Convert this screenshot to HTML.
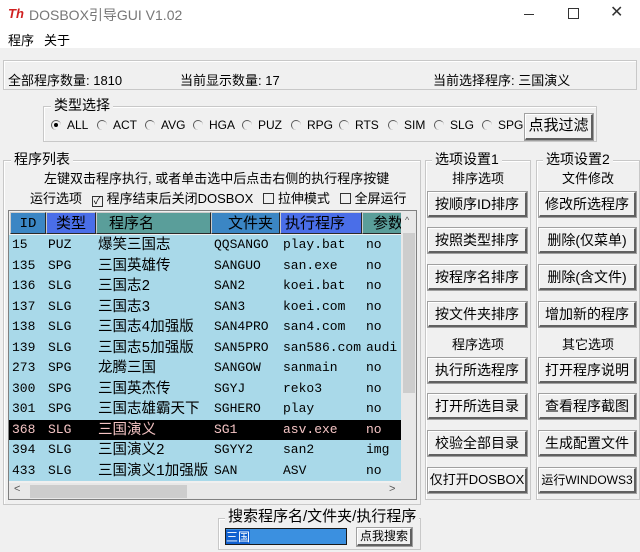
<!DOCTYPE html><html><head><meta charset="utf-8"><style>
*{margin:0;padding:0;box-sizing:border-box}
body{width:640px;height:552px;background:#f0f0f0;position:relative;overflow:hidden;font-family:"Liberation Sans","Noto Sans CJK SC",sans-serif;font-size:13px;color:#000}
.a{position:absolute;white-space:nowrap}
.grp{position:absolute;border:1px solid #c8c8c8;box-shadow:inset 1px 1px 0 #fff}
.lg{position:absolute;background:#f0f0f0;padding:0 3px;font-size:14px;line-height:16px}
.btn{position:absolute;background:#f0f0f0;border:1px solid #fff;border-right:2px solid #606060;border-bottom:2px solid #606060;outline:1px solid #a0a0a0;font-size:14px;text-align:center;line-height:22px;font-family:"Liberation Sans","Noto Sans CJK SC",sans-serif}
.rad{position:absolute;top:118px;font-size:12px;white-space:nowrap}
.rad i{display:inline-block;width:10px;height:10px;border-radius:50%;border-left:1px solid #555;border-top:1px solid #555;margin-right:6px;vertical-align:-1px;position:relative}
.rad i.on::after{content:"";position:absolute;left:2px;top:2px;width:4px;height:4px;border-radius:50%;background:#000}
.tbl{position:absolute;left:8px;top:210px;width:409px;height:290px;border:1px solid #808080;background:#f0f0f0;overflow:hidden}
.row{position:absolute;left:0;width:392px;height:20.5px;background:#a9d9e9;font-family:"Liberation Mono","Noto Serif CJK SC",monospace;font-size:13px;line-height:20px}
.row span{position:absolute;top:0}
.row span.c{font-size:14.5px;font-family:"Liberation Mono","Noto Sans CJK SC",monospace;line-height:20px;top:1px}
.hd{position:absolute;top:1px;height:22px;font-size:15px;line-height:22px;border:1px solid #2a2a2a;border-top-color:#ccc;border-left-color:#ccc}
.cb{display:inline-block;width:11px;height:11px;border:1px solid #333;margin:0 4px 0 6px;vertical-align:-1px;font-size:10px;line-height:9px;text-align:center}
</style></head><body>
<div class="a" style="left:0;top:0;width:640px;height:48px;background:#fff"></div>
<div class="a" style="left:8px;top:6px;color:#d02020;font-style:italic;font-weight:bold;font-size:13px">Th</div>
<div class="a" style="left:29px;top:5px;color:#777;font-size:14px">DOSBOX引导GUI V1.02</div>
<div class="a" style="width:10px;height:1px;background:#333;left:524px;top:14px"></div>
<div class="a" style="left:568px;top:8px;width:11px;height:11px;border:1px solid #333"></div>
<div class="a" style="left:610px;top:2px;font-size:16px;color:#333">✕</div>
<div class="a" style="left:8px;top:30px">程序</div>
<div class="a" style="left:44px;top:30px">关于</div>
<div class="grp" style="left:3px;top:60px;width:634px;height:30px"></div>
<div class="a" style="left:8px;top:70px">全部程序数量: 1810</div>
<div class="a" style="left:180px;top:70px">当前显示数量: 17</div>
<div class="a" style="left:433px;top:70px">当前选择程序: 三国演义</div>
<div class="grp" style="left:43px;top:106px;width:554px;height:36px"></div>
<div class="lg" style="left:51px;top:97px">类型选择</div>
<span class="rad" style="left:51px"><i class="on"></i>ALL</span>
<span class="rad" style="left:97px"><i></i>ACT</span>
<span class="rad" style="left:145px"><i></i>AVG</span>
<span class="rad" style="left:193px"><i></i>HGA</span>
<span class="rad" style="left:242px"><i></i>PUZ</span>
<span class="rad" style="left:291px"><i></i>RPG</span>
<span class="rad" style="left:339px"><i></i>RTS</span>
<span class="rad" style="left:388px"><i></i>SIM</span>
<span class="rad" style="left:434px"><i></i>SLG</span>
<span class="rad" style="left:482px"><i></i>SPG</span>
<div class="btn" style="left:525px;top:114px;width:68px;height:26px;font-size:15px;line-height:22px">点我过滤</div>
<div class="grp" style="left:3px;top:160px;width:418px;height:345px"></div>
<div class="lg" style="left:11px;top:151px">程序列表</div>
<div class="a" style="left:44px;top:168px">左键双击程序执行, 或者单击选中后点击右侧的执行程序按键</div>
<div class="a" style="left:30px;top:188px">运行选项 <span class="cb">✓</span>程序结束后关闭DOSBOX <span class="cb"></span>拉伸模式 <span class="cb"></span>全屏运行</div>
<div class="tbl">
<div class="hd" style="left:1px;width:36px;background:#3b86c4;text-align:center;font-family:'Liberation Mono',monospace;font-size:14px">ID</div>
<div class="hd" style="left:37px;width:50px;background:#4a6ee8;text-align:center">类型</div>
<div class="hd" style="left:87px;width:115px;background:#5a9e9a;padding-left:12px">程序名</div>
<div class="hd" style="left:202px;width:69px;background:#3b86c4;text-align:right;padding-right:6px">文件夹</div>
<div class="hd" style="left:271px;width:82px;background:#4a6ee8;padding-left:4px">执行程序</div>
<div class="hd" style="left:353px;width:45px;background:#5a9e9a;padding-left:10px">参数</div>
<div class="a" style="left:392px;top:0;width:16px;height:272px;background:#e8e8e8"></div>
<div class="a" style="left:396px;top:4px;font-size:9px;color:#555">^</div>
<div class="a" style="left:394px;top:22px;width:12px;height:160px;background:#cdcdcd"></div>
<div class="a" style="left:0;top:272px;width:408px;height:17px;background:#e8e8e8"></div>
<div class="a" style="left:21px;top:274px;width:157px;height:13px;background:#cdcdcd"></div>
<div class="a" style="left:5px;top:272px;font-size:11px;color:#555">&lt;</div>
<div class="a" style="left:380px;top:272px;font-size:11px;color:#555">&gt;</div>
</div>
<div id="rows"></div>
<script>
var d=[["15","PUZ","爆笑三国志","QQSANGO","play.bat","no"],["135","SPG","三国英雄传","SANGUO","san.exe","no"],["136","SLG","三国志2","SAN2","koei.bat","no"],["137","SLG","三国志3","SAN3","koei.com","no"],["138","SLG","三国志4加强版","SAN4PRO","san4.com","no"],["139","SLG","三国志5加强版","SAN5PRO","san586.com","audi"],["273","SPG","龙腾三国","SANGOW","sanmain","no"],["300","SPG","三国英杰传","SGYJ","reko3","no"],["301","SPG","三国志雄霸天下","SGHERO","play","no"],["368","SLG","三国演义","SG1","asv.exe","no"],["394","SLG","三国演义2","SGYY2","san2","img"],["433","SLG","三国演义1加强版","SAN","ASV","no"]];
var x=[3,39,89,205,274,357],h="";
for(var i=0;i<d.length;i++){var s=i==9;h+='<div class="row" style="left:9px;top:'+(235+i*20.5)+'px;'+(s?'background:#000;color:#f4c4c4':'')+'">';for(var j=0;j<6;j++)h+='<span'+(j==2?' class="c"':'')+' style="left:'+x[j]+'px">'+d[i][j]+'</span>';h+='</div>';}
document.getElementById("rows").innerHTML=h;
</script>
<div class="grp" style="left:425px;top:160px;width:106px;height:340px"></div>
<div class="lg" style="left:432px;top:151px">选项设置1</div>
<div class="a" style="left:452px;top:168px">排序选项</div>
<div class="grp" style="left:536px;top:160px;width:104px;height:340px"></div>
<div class="lg" style="left:543px;top:151px">选项设置2</div>
<div class="a" style="left:562px;top:168px">文件修改</div>
<div class="btn" style="left:428px;top:192px;width:99px;height:25px">按顺序ID排序</div>
<div class="btn" style="left:428px;top:228px;width:99px;height:25px">按照类型排序</div>
<div class="btn" style="left:428px;top:265px;width:99px;height:25px">按程序名排序</div>
<div class="btn" style="left:428px;top:302px;width:99px;height:25px">按文件夹排序</div>
<div class="a" style="left:452px;top:334px">程序选项</div>
<div class="btn" style="left:428px;top:358px;width:99px;height:25px">执行所选程序</div>
<div class="btn" style="left:428px;top:394px;width:99px;height:25px">打开所选目录</div>
<div class="btn" style="left:428px;top:431px;width:99px;height:25px">校验全部目录</div>
<div class="btn" style="left:428px;top:468px;width:99px;height:25px;font-size:13px">仅打开DOSBOX</div>
<div class="btn" style="left:539px;top:192px;width:97px;height:25px">修改所选程序</div>
<div class="btn" style="left:539px;top:228px;width:97px;height:25px">删除(仅菜单)</div>
<div class="btn" style="left:539px;top:265px;width:97px;height:25px">删除(含文件)</div>
<div class="btn" style="left:539px;top:302px;width:97px;height:25px">增加新的程序</div>
<div class="a" style="left:562px;top:334px">其它选项</div>
<div class="btn" style="left:539px;top:358px;width:97px;height:25px">打开程序说明</div>
<div class="btn" style="left:539px;top:394px;width:97px;height:25px">查看程序截图</div>
<div class="btn" style="left:539px;top:431px;width:97px;height:25px">生成配置文件</div>
<div class="btn" style="left:539px;top:468px;width:97px;height:25px;font-size:12px">运行WINDOWS3</div>
<div class="grp" style="left:218px;top:518px;width:203px;height:32px"></div>
<div class="lg" style="left:225px;top:509px;font-size:15px">搜索程序名/文件夹/执行程序</div>
<div class="a" style="left:225px;top:528px;width:122px;height:17px;background:#3b90e0;border:1px solid #1a1a1a"><span style="background:#1060d0;color:#fff;font-size:12px;line-height:15px">三国</span></div>
<div class="btn" style="left:357px;top:528px;width:55px;height:18px;font-size:12px;line-height:14px">点我搜索</div>
</body></html>
